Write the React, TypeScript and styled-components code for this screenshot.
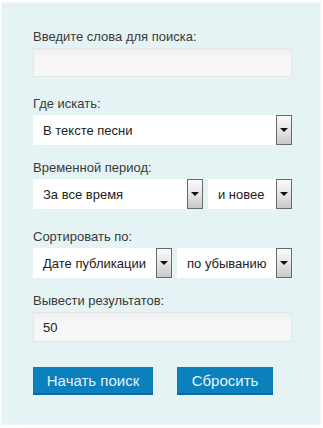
import * as React from "react";
import styled, { createGlobalStyle } from "styled-components";

const GlobalStyle = createGlobalStyle`
  html, body {
    margin: 0;
    padding: 0;
    background: #ffffff;
  }
  body {
    font-family: "Liberation Sans", Arial, sans-serif;
  }
`;

const Panel = styled.form`
  box-sizing: border-box;
  width: 320px;
  height: 423px;
  margin: 2px 0 0 1px;
  padding: 26px 0 0 31px;
  background: #e5f3f4;
  border: 1px solid #eef8f8;
  display: flex;
  flex-direction: column;
`;

const Group = styled.div<{ $gap?: number }>`
  display: flex;
  flex-direction: column;
  width: 259px;
  margin-bottom: ${(p) => p.$gap ?? 18}px;
`;

const Label = styled.div`
  font-size: 13px;
  line-height: 16px;
  color: #3a3a3a;
  margin-bottom: 3px;
`;

const TextBox = styled.div<{ $h?: number }>`
  box-sizing: border-box;
  height: ${(p) => p.$h ?? 30}px;
  padding: 0 9px;
  display: flex;
  align-items: center;
  font-size: 13px;
  color: #222;
  background: linear-gradient(#efefef, #f7f7f7 30%, #f7f7f7);
  border: 1px solid #e4e6e6;
`;

const Row = styled.div`
  display: flex;
  gap: 5px;
`;

const Select = styled.div<{ $w?: number }>`
  box-sizing: border-box;
  height: 30px;
  ${(p) => (p.$w ? `width: ${p.$w}px;` : "flex: 1;")}
  display: flex;
  align-items: center;
  background: #ffffff;
  font-size: 13px;
  color: #222;
`;

const SelectText = styled.span`
  flex: 1;
  padding-left: 10px;
  white-space: nowrap;
  overflow: hidden;
`;

const Arrow = styled.span`
  box-sizing: border-box;
  width: 16px;
  height: 30px;
  border: 1px solid #6a6a6a;
  background: linear-gradient(#fbfbfb, #e6e6e6 50%, #c8c8c8);
  display: flex;
  align-items: center;
  justify-content: center;
  &::after {
    content: "";
    width: 0;
    height: 0;
    border-left: 4px solid transparent;
    border-right: 4px solid transparent;
    border-top: 4px solid #111;
  }
`;

const Buttons = styled.div`
  display: flex;
  gap: 24px;
  margin-top: 7px;
`;

const Button = styled.button<{ $w: number }>`
  box-sizing: border-box;
  width: ${(p) => p.$w}px;
  height: 28px;
  padding: 0;
  border: 0;
  border-bottom: 2px solid #0a6aa0;
  background: #0b80bc;
  color: #e2f4fb;
  font-family: "Liberation Sans", Arial, sans-serif;
  font-size: 15px;
  cursor: pointer;
`;

const Dropdown = ({ text, w }: { text: string; w?: number }) => (
  <Select $w={w}>
    <SelectText>{text}</SelectText>
    <Arrow />
  </Select>
);

export default function App() {
  return (
    <>
      <GlobalStyle />
      <Panel onSubmit={(e) => e.preventDefault()}>
        <Group $gap={19}>
          <Label>Введите слова для поиска:</Label>
          <TextBox $h={29} />
        </Group>
        <Group $gap={15}>
          <Label>Где искать:</Label>
          <Dropdown text="В тексте песни" />
        </Group>
        <Group $gap={20}>
          <Label>Временной период:</Label>
          <Row>
            <Dropdown text="За все время" w={170} />
            <Dropdown text="и новее" />
          </Row>
        </Group>
        <Group $gap={15}>
          <Label>Сортировать по:</Label>
          <Row>
            <Dropdown text="Дате публикации" w={139} />
            <Dropdown text="по убыванию" />
          </Row>
        </Group>
        <Group $gap={18}>
          <Label>Вывести результатов:</Label>
          <TextBox>50</TextBox>
        </Group>
        <Buttons>
          <Button $w={120} type="submit">Начать поиск</Button>
          <Button $w={96} type="reset">Сбросить</Button>
        </Buttons>
      </Panel>
    </>
  );
}
